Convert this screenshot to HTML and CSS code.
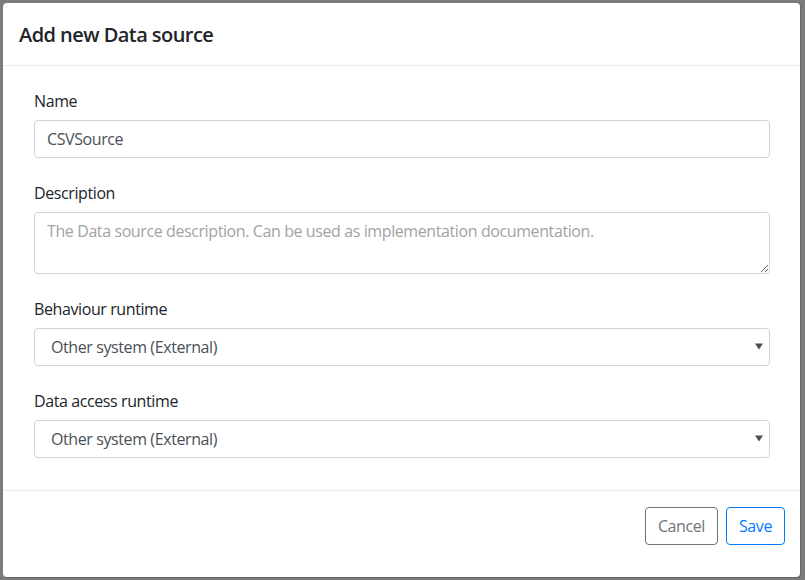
FILE: index.html
```html
<!DOCTYPE html>
<html>
<head>
<meta charset="utf-8">
<link rel="stylesheet" href="styles.css">
</head>
<body>
<div class="modal">
  <div class="modal-header">
    <h5 class="modal-title">Add new Data source</h5>
  </div>
  <div class="modal-body">
    <div class="form-group">
      <label class="label">Name</label>
      <input class="control" type="text" value="CSVSource">
    </div>
    <div class="form-group">
      <label class="label">Description</label>
      <textarea class="control textarea" rows="2" placeholder="The Data source description. Can be used as implementation documentation."></textarea>
    </div>
    <div class="form-group">
      <label class="label">Behaviour runtime</label>
      <div class="select-wrap">
        <select class="control select"><option>Other system (External)</option></select>
        <svg class="arrow" width="8" height="7" viewBox="0 0 8 7"><path d="M0 0.5h8L4 6.5z" fill="#495057"/></svg>
      </div>
    </div>
    <div class="form-group">
      <label class="label">Data access runtime</label>
      <div class="select-wrap">
        <select class="control select"><option>Other system (External)</option></select>
        <svg class="arrow" width="8" height="7" viewBox="0 0 8 7"><path d="M0 0.5h8L4 6.5z" fill="#495057"/></svg>
      </div>
    </div>
  </div>
  <div class="modal-footer">
    <button class="btn btn-cancel">Cancel</button>
    <button class="btn btn-save">Save</button>
  </div>
</div>
</body>
</html>
```
FILE: styles.css
```css
html, body {
  margin: 0;
  padding: 0;
  height: 100%;
}
body {
  background: #7b7b7b;
  font-family: "Open Sans", "Noto Sans", sans-serif;
  color: #212529;
  letter-spacing: -0.4px;
  overflow: hidden;
}
.modal {
  box-sizing: border-box;
  margin: 3px 0 0 3px;
  width: 797px;
  height: 574px;
  background: #fff;
  border-radius: 4px;
  display: flex;
  flex-direction: column;
  box-shadow: 1px 1px 0 #666;
}
.modal-header {
  padding: 17px 16px 15px 16px;
  border-bottom: 1px solid #e9ecef;
}
.modal-title {
  margin: 0;
  font-size: 20px;
  font-weight: 600;
  line-height: 30px;
  letter-spacing: -0.55px;
}
.modal-body {
  padding: 23px 30px 9px 31px;
  border-bottom: 1px solid #e9ecef;
}
.form-group {
  display: flex;
  flex-direction: column;
  margin-bottom: 23px;
}
.label {
  font-size: 16px;
  line-height: 24px;
  margin-bottom: 7px;
}
.control {
  box-sizing: border-box;
  width: 100%;
  height: 38px;
  padding: 6px 12px;
  font-family: inherit;
  font-size: 16px;
  line-height: 24px;
  letter-spacing: -0.4px;
  color: #495057;
  background: #fff;
  border: 1px solid #ced4da;
  border-radius: 4px;
  margin: 0;
  outline: none;
}
.textarea {
  height: 62px;
  resize: vertical;
  display: block;
}
.textarea::placeholder {
  color: #a3a3a3;
  opacity: 1;
}
.select-wrap {
  position: relative;
}
.select {
  appearance: none;
  -webkit-appearance: none;
  padding-left: 16px;
  display: block;
}
.arrow {
  position: absolute;
  right: 7px;
  top: 15px;
}
.modal-footer {
  display: flex;
  justify-content: flex-end;
  gap: 8px;
  padding: 16px 15px 32px 16px;
}
.btn {
  height: 38px;
  padding: 6px 12px;
  font-family: inherit;
  font-size: 16px;
  line-height: 24px;
  letter-spacing: -0.4px;
  background: #fff;
  border-radius: 4px;
  border: 1px solid;
  cursor: pointer;
}
.btn-cancel {
  color: #6c757d;
  border-color: #6c757d;
}
.btn-save {
  color: #007bff;
  border-color: #007bff;
}
```
